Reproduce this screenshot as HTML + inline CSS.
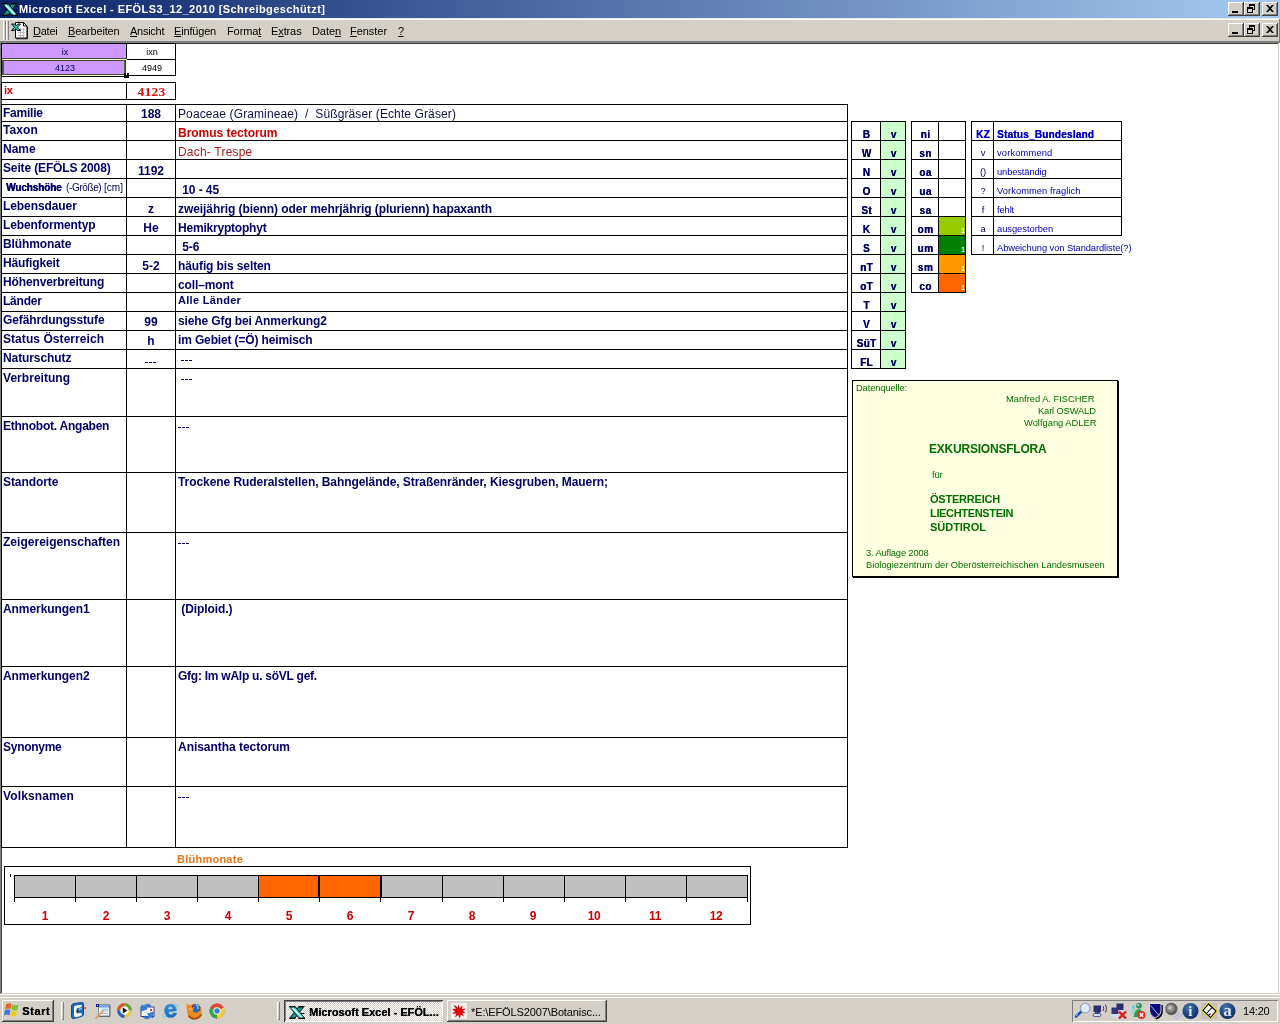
<!DOCTYPE html>
<html><head><meta charset="utf-8"><title>Microsoft Excel - EFÖLS3_12_2010</title>
<style>
html,body{margin:0;padding:0;}
body{width:1280px;height:1024px;overflow:hidden;background:#fff;position:relative;font-family:"Liberation Sans",sans-serif;}
.t{position:absolute;white-space:pre;font-family:"Liberation Sans",sans-serif;will-change:transform;}
.b{position:absolute;}
svg{position:absolute;overflow:visible;will-change:transform;}
u{text-decoration:underline;text-underline-offset:1px;}
</style></head><body>

<div class="b" style="left:0px;top:0px;width:1280px;height:18px;background:linear-gradient(to right,#0a246a 0%,#a6caf0 100%);"></div>

<div class="t" style="left:19px;top:2px;font-size:11px;line-height:14px;color:#fff;font-weight:bold;letter-spacing:0.42px;">Microsoft Excel - EFÖLS3_12_2010 [Schreibgeschützt]</div>
<div class="b" style="left:1228px;top:2px;width:16px;height:14px;background:#d4d0c8;box-shadow:inset -1px -1px 0 #404040,inset 1px 1px 0 #fff,inset -2px -2px 0 #808080;"></div>
<div class="b" style="left:1232px;top:11px;width:6px;height:2px;background:#000;"></div>
<div class="b" style="left:1244px;top:2px;width:16px;height:14px;background:#d4d0c8;box-shadow:inset -1px -1px 0 #404040,inset 1px 1px 0 #fff,inset -2px -2px 0 #808080;"></div>
<div class="b" style="left:1249px;top:4px;width:4px;height:3px;border:1px solid #000;border-top-width:2px;"></div>
<div class="b" style="left:1247px;top:7px;width:4px;height:3px;border:1px solid #000;border-top-width:2px;background:#d4d0c8;"></div>
<div class="b" style="left:1262px;top:2px;width:16px;height:14px;background:#d4d0c8;box-shadow:inset -1px -1px 0 #404040,inset 1px 1px 0 #fff,inset -2px -2px 0 #808080;"></div>
<svg style="left:1266px;top:5px" width="8" height="7" viewBox="0 0 8 7"><path d="M0 0h2l2 2 2-2h2l-3 3.5 3 3.5h-2l-2-2-2 2h-2l3-3.5z" fill="#000"/></svg>
<div class="b" style="left:0px;top:18px;width:1280px;height:25px;background:#d4d0c8;"></div>
<div class="b" style="left:0px;top:18px;width:1280px;height:1px;background:#ece9e2;"></div>
<div class="b" style="left:0px;top:19px;width:1280px;height:1px;background:#fff;"></div>
<div class="b" style="left:1279px;top:19px;width:1px;height:24px;background:#808080;"></div>
<div class="b" style="left:0px;top:41px;width:1280px;height:1px;background:#808080;"></div>
<div class="b" style="left:0px;top:42px;width:1280px;height:1px;background:#808080;"></div>
<div class="b" style="left:1228px;top:23px;width:16px;height:14px;background:#d4d0c8;box-shadow:inset -1px -1px 0 #404040,inset 1px 1px 0 #fff,inset -2px -2px 0 #808080;"></div>
<div class="b" style="left:1232px;top:32px;width:6px;height:2px;background:#000;"></div>
<div class="b" style="left:1244px;top:23px;width:16px;height:14px;background:#d4d0c8;box-shadow:inset -1px -1px 0 #404040,inset 1px 1px 0 #fff,inset -2px -2px 0 #808080;"></div>
<div class="b" style="left:1249px;top:25px;width:4px;height:3px;border:1px solid #000;border-top-width:2px;"></div>
<div class="b" style="left:1247px;top:28px;width:4px;height:3px;border:1px solid #000;border-top-width:2px;background:#d4d0c8;"></div>
<div class="b" style="left:1262px;top:23px;width:16px;height:14px;background:#d4d0c8;box-shadow:inset -1px -1px 0 #404040,inset 1px 1px 0 #fff,inset -2px -2px 0 #808080;"></div>
<svg style="left:1266px;top:26px" width="8" height="7" viewBox="0 0 8 7"><path d="M0 0h2l2 2 2-2h2l-3 3.5 3 3.5h-2l-2-2-2 2h-2l3-3.5z" fill="#000"/></svg>
<div class="b" style="left:3px;top:21px;width:1px;height:19px;background:#fff;"></div>
<div class="b" style="left:5px;top:21px;width:1px;height:19px;background:#808080;"></div>
<div class="b" style="left:6px;top:21px;width:1px;height:19px;background:#fff;"></div>
<div class="b" style="left:8px;top:21px;width:1px;height:19px;background:#808080;"></div>
<svg style="left:10px;top:21px" width="18" height="18" viewBox="0 0 18 18"><path d="M5.500 1.500h8l3.500 3.500v12h-11.500z" fill="#fff" stroke="#000" stroke-width="1"/><path d="M13.500 1.500v3.500h3.500" fill="none" stroke="#000"/><path d="M6 17.800h11.500M17.500 6v12" stroke="#000" stroke-width=".8"/><path d="M8 8.500h7M8 11.500h7M8 14.500h7M10.500 7v9M13.500 7v9" stroke="#b8b8b8" stroke-width="1"/><path d="M1.500 3h3l1.700 1.800L7.800 3h2.700L7.400 6.200 10.500 9.500h-3L5.800 7.600 4.200 9.500H1.500l3-3.300z" fill="#28c8c0" stroke="#000" stroke-width=".9"/></svg>
<div class="t" style="left:32.5px;top:24px;font-size:11px;line-height:14px;color:#000;letter-spacing:-0.236px;"><u>D</u>atei</div>
<div class="t" style="left:67.5px;top:24px;font-size:11px;line-height:14px;color:#000;letter-spacing:-0.171px;"><u>B</u>earbeiten</div>
<div class="t" style="left:129.75px;top:24px;font-size:11px;line-height:14px;color:#000;letter-spacing:-0.26px;"><u>A</u>nsicht</div>
<div class="t" style="left:174px;top:24px;font-size:11px;line-height:14px;color:#000;letter-spacing:-0.178px;"><u>E</u>infügen</div>
<div class="t" style="left:226.5px;top:24px;font-size:11px;line-height:14px;color:#000;letter-spacing:-0.098px;">Forma<u>t</u></div>
<div class="t" style="left:270.5px;top:24px;font-size:11px;line-height:14px;color:#000;letter-spacing:-0.112px;">E<u>x</u>tras</div>
<div class="t" style="left:311.5px;top:24px;font-size:11px;line-height:14px;color:#000;letter-spacing:-0.071px;">Date<u>n</u></div>
<div class="t" style="left:350px;top:24px;font-size:11px;line-height:14px;color:#000;letter-spacing:-0.042px;"><u>F</u>enster</div>
<div class="t" style="left:397.5px;top:24px;font-size:11px;line-height:14px;color:#000;letter-spacing:-0.618px;"><u>?</u></div>
<div class="b" style="left:0px;top:43px;width:1px;height:950px;background:#808080;"></div>
<div class="b" style="left:1px;top:43px;width:1px;height:950px;background:#404040;"></div>
<div class="b" style="left:0px;top:43px;width:1278px;height:1px;background:#404040;"></div>
<div class="b" style="left:1278px;top:43px;width:1px;height:950px;background:#d4d0c8;"></div>
<div class="b" style="left:1279px;top:43px;width:1px;height:950px;background:#fff;"></div>
<div class="b" style="left:0px;top:993px;width:1280px;height:1px;background:#d4d0c8;"></div>
<div class="b" style="left:0px;top:994px;width:1280px;height:1px;background:#fff;"></div>
<div class="b" style="left:0px;top:43px;width:1px;height:951px;background:#808080;"></div>
<div class="b" style="left:2px;top:44px;width:124px;height:31px;background:#cc99ff;"></div>
<div class="b" style="left:1px;top:43px;width:175px;height:1px;background:#000;"></div>
<div class="b" style="left:1px;top:59px;width:175px;height:1px;background:#000;"></div>
<div class="b" style="left:1px;top:75px;width:175px;height:1px;background:#000;"></div>
<div class="b" style="left:1px;top:43px;width:1px;height:33px;background:#000;"></div>
<div class="b" style="left:126px;top:43px;width:1px;height:33px;background:#000;"></div>
<div class="b" style="left:175px;top:43px;width:1px;height:33px;background:#000;"></div>
<div class="t" style="left:3px;top:46px;font-size:9px;line-height:13px;color:#000066;width:124px;text-align:center;">ix</div>
<div class="t" style="left:128px;top:46px;font-size:9px;line-height:13px;color:#000;width:48px;text-align:center;">ixn</div>
<div class="t" style="left:3px;top:62px;font-size:9px;line-height:13px;color:#000066;width:124px;text-align:center;">4123</div>
<div class="t" style="left:128px;top:62px;font-size:9px;line-height:13px;color:#000;width:48px;text-align:center;">4949</div>
<div class="b" style="left:2px;top:58px;width:125px;height:1px;background:#474b3a;"></div>
<div class="b" style="left:2px;top:59px;width:125px;height:1px;background:#f2f7d8;"></div>
<div class="b" style="left:2px;top:60px;width:124px;height:1px;background:#474b3a;"></div>
<div class="b" style="left:2px;top:74px;width:122px;height:1px;background:#474b3a;"></div>
<div class="b" style="left:2px;top:75px;width:122px;height:1px;background:#f2f7d8;"></div>
<div class="b" style="left:2px;top:76px;width:122px;height:1px;background:#000;"></div>
<div class="b" style="left:2px;top:60px;width:1px;height:15px;background:#474b3a;"></div>
<div class="b" style="left:3px;top:60px;width:1px;height:15px;background:#55603c;"></div>
<div class="b" style="left:124px;top:60px;width:1px;height:14px;background:#55603c;"></div>
<div class="b" style="left:125px;top:60px;width:1px;height:14px;background:#474b3a;"></div>
<div class="b" style="left:126px;top:60px;width:1px;height:13px;background:#f2f7d8;"></div>
<div class="b" style="left:124px;top:73px;width:5px;height:5px;background:#000;"></div>
<div class="b" style="left:126px;top:73px;width:1px;height:2px;background:#f2f7d8;"></div>
<div class="b" style="left:1px;top:82px;width:175px;height:1px;background:#000;"></div>
<div class="b" style="left:1px;top:99px;width:175px;height:1px;background:#000;"></div>
<div class="b" style="left:1px;top:82px;width:1px;height:18px;background:#000;"></div>
<div class="b" style="left:126px;top:82px;width:1px;height:18px;background:#000;"></div>
<div class="b" style="left:175px;top:82px;width:1px;height:18px;background:#000;"></div>
<div class="t" style="left:4px;top:83px;font-size:11px;line-height:14px;color:#dd0000;font-weight:bold;letter-spacing:-0.3px;">ix</div>
<div class="t" style="left:127px;top:84px;font-size:13.5px;line-height:15px;color:#e01010;font-weight:bold;width:49px;text-align:center;letter-spacing:0.25px;font-family:'Liberation Serif',serif;">4123</div>
<div class="b" style="left:1px;top:104px;width:847px;height:1px;background:#000;"></div>
<div class="b" style="left:1px;top:121px;width:847px;height:1px;background:#000;"></div>
<div class="b" style="left:1px;top:140px;width:847px;height:1px;background:#000;"></div>
<div class="b" style="left:1px;top:159px;width:847px;height:1px;background:#000;"></div>
<div class="b" style="left:1px;top:178px;width:847px;height:1px;background:#000;"></div>
<div class="b" style="left:1px;top:197px;width:847px;height:1px;background:#000;"></div>
<div class="b" style="left:1px;top:216px;width:847px;height:1px;background:#000;"></div>
<div class="b" style="left:1px;top:235px;width:847px;height:1px;background:#000;"></div>
<div class="b" style="left:1px;top:254px;width:847px;height:1px;background:#000;"></div>
<div class="b" style="left:1px;top:273px;width:847px;height:1px;background:#000;"></div>
<div class="b" style="left:1px;top:292px;width:847px;height:1px;background:#000;"></div>
<div class="b" style="left:1px;top:311px;width:847px;height:1px;background:#000;"></div>
<div class="b" style="left:1px;top:330px;width:847px;height:1px;background:#000;"></div>
<div class="b" style="left:1px;top:349px;width:847px;height:1px;background:#000;"></div>
<div class="b" style="left:1px;top:368px;width:847px;height:1px;background:#000;"></div>
<div class="b" style="left:1px;top:416px;width:847px;height:1px;background:#000;"></div>
<div class="b" style="left:1px;top:472px;width:847px;height:1px;background:#000;"></div>
<div class="b" style="left:1px;top:532px;width:847px;height:1px;background:#000;"></div>
<div class="b" style="left:1px;top:599px;width:847px;height:1px;background:#000;"></div>
<div class="b" style="left:1px;top:666px;width:847px;height:1px;background:#000;"></div>
<div class="b" style="left:1px;top:737px;width:847px;height:1px;background:#000;"></div>
<div class="b" style="left:1px;top:786px;width:847px;height:1px;background:#000;"></div>
<div class="b" style="left:1px;top:847px;width:847px;height:1px;background:#000;"></div>
<div class="b" style="left:1px;top:104px;width:1px;height:744px;background:#000;"></div>
<div class="b" style="left:126px;top:104px;width:1px;height:744px;background:#000;"></div>
<div class="b" style="left:175px;top:104px;width:1px;height:744px;background:#000;"></div>
<div class="b" style="left:847px;top:104px;width:1px;height:744px;background:#000;"></div>
<div class="t" style="left:3px;top:106px;font-size:12px;line-height:14px;color:#000066;font-weight:bold;letter-spacing:-0.222px;">Familie</div>
<div class="t" style="left:127px;top:107px;font-size:12px;line-height:14px;color:#000066;font-weight:bold;width:48px;text-align:center;">188</div>
<div class="t" style="left:178px;top:107px;font-size:12px;line-height:14px;color:#101048;letter-spacing:0.109px;">Poaceae (Gramineae)  /  Süßgräser (Echte Gräser)</div>
<div class="t" style="left:3px;top:123px;font-size:12px;line-height:14px;color:#000066;font-weight:bold;letter-spacing:0.07px;">Taxon</div>
<div class="t" style="left:177.5px;top:126px;font-size:12px;line-height:14px;color:#cc0000;font-weight:bold;letter-spacing:-0.035px;">Bromus tectorum</div>
<div class="t" style="left:3px;top:142px;font-size:12px;line-height:14px;color:#000066;font-weight:bold;letter-spacing:-0.034px;">Name</div>
<div class="t" style="left:178px;top:145px;font-size:12px;line-height:14px;color:#aa2020;letter-spacing:0.206px;">Dach- Trespe</div>
<div class="t" style="left:3px;top:161px;font-size:12px;line-height:14px;color:#000066;font-weight:bold;letter-spacing:-0.139px;">Seite (EFÖLS 2008)</div>
<div class="t" style="left:127px;top:164px;font-size:12px;line-height:14px;color:#000066;font-weight:bold;width:48px;text-align:center;">1192</div>
<div class="t" style="left:5.5px;top:181px;font-size:10px;line-height:13px;color:#000066;font-weight:bold;letter-spacing:-0.11px;text-shadow:.45px 0 0 #000066;">Wuchshöhe</div>
<div class="t" style="left:66px;top:181px;font-size:10px;line-height:13px;color:#000052;letter-spacing:-0.379px;">(-Größe)</div>
<div class="t" style="left:103.5px;top:181px;font-size:10px;line-height:13px;color:#000052;letter-spacing:0.028px;">[cm]</div>
<div class="t" style="left:178.5px;top:183px;font-size:12px;line-height:14px;color:#000066;font-weight:bold;letter-spacing:-0.08px;"> 10 - 45</div>
<div class="t" style="left:3px;top:199px;font-size:12px;line-height:14px;color:#000066;font-weight:bold;letter-spacing:-0.081px;">Lebensdauer</div>
<div class="t" style="left:127px;top:202px;font-size:12px;line-height:14px;color:#000066;font-weight:bold;width:48px;text-align:center;">z</div>
<div class="t" style="left:177.5px;top:202px;font-size:12px;line-height:14px;color:#000066;font-weight:bold;letter-spacing:-0.074px;">zweijährig (bienn) oder mehrjährig (plurienn) hapaxanth</div>
<div class="t" style="left:3px;top:218px;font-size:12px;line-height:14px;color:#000066;font-weight:bold;letter-spacing:-0.108px;">Lebenformentyp</div>
<div class="t" style="left:127px;top:221px;font-size:12px;line-height:14px;color:#000066;font-weight:bold;width:48px;text-align:center;">He</div>
<div class="t" style="left:177.5px;top:221px;font-size:12px;line-height:14px;color:#000066;font-weight:bold;letter-spacing:-0.204px;">Hemikryptophyt</div>
<div class="t" style="left:3px;top:237px;font-size:12px;line-height:14px;color:#000066;font-weight:bold;letter-spacing:-0.104px;">Blühmonate</div>
<div class="t" style="left:178.5px;top:240px;font-size:12px;line-height:14px;color:#000066;font-weight:bold;letter-spacing:-0.08px;"> 5-6</div>
<div class="t" style="left:3px;top:256px;font-size:12px;line-height:14px;color:#000066;font-weight:bold;letter-spacing:-0.141px;">Häufigkeit</div>
<div class="t" style="left:127px;top:259px;font-size:12px;line-height:14px;color:#000066;font-weight:bold;width:48px;text-align:center;">5-2</div>
<div class="t" style="left:177.5px;top:259px;font-size:12px;line-height:14px;color:#000066;font-weight:bold;letter-spacing:-0.111px;">häufig bis selten</div>
<div class="t" style="left:3px;top:275px;font-size:12px;line-height:14px;color:#000066;font-weight:bold;letter-spacing:-0.14px;">Höhenverbreitung</div>
<div class="t" style="left:177.5px;top:278px;font-size:12px;line-height:14px;color:#000066;font-weight:bold;letter-spacing:-0.108px;">coll–mont</div>
<div class="t" style="left:3px;top:294px;font-size:12px;line-height:14px;color:#000066;font-weight:bold;letter-spacing:-0.235px;">Länder</div>
<div class="t" style="left:177.5px;top:294px;font-size:11px;line-height:13px;color:#000066;font-weight:bold;letter-spacing:0.3px;">Alle Länder</div>
<div class="t" style="left:3px;top:313px;font-size:12px;line-height:14px;color:#000066;font-weight:bold;letter-spacing:-0.115px;">Gefährdungsstufe</div>
<div class="t" style="left:127px;top:315px;font-size:12px;line-height:14px;color:#000066;font-weight:bold;width:48px;text-align:center;">99</div>
<div class="t" style="left:177.5px;top:314px;font-size:12px;line-height:14px;color:#000066;font-weight:bold;letter-spacing:-0.119px;">siehe Gfg bei Anmerkung2</div>
<div class="t" style="left:3px;top:332px;font-size:12px;line-height:14px;color:#000066;font-weight:bold;letter-spacing:0.062px;">Status Österreich</div>
<div class="t" style="left:127px;top:334px;font-size:12px;line-height:14px;color:#000066;font-weight:bold;width:48px;text-align:center;">h</div>
<div class="t" style="left:177.5px;top:333px;font-size:12px;line-height:14px;color:#000066;font-weight:bold;letter-spacing:-0.14px;">im Gebiet (=Ö) heimisch</div>
<div class="t" style="left:3px;top:351px;font-size:12px;line-height:14px;color:#000066;font-weight:bold;letter-spacing:-0.095px;">Naturschutz</div>
<div class="b" style="left:145px;top:362px;width:3px;height:1px;background:#000058;"></div>
<div class="b" style="left:149px;top:362px;width:3px;height:1px;background:#000058;"></div>
<div class="b" style="left:153px;top:362px;width:3px;height:1px;background:#000058;"></div>
<div class="b" style="left:181px;top:360px;width:3px;height:1px;background:#000058;"></div>
<div class="b" style="left:185px;top:360px;width:3px;height:1px;background:#000058;"></div>
<div class="b" style="left:189px;top:360px;width:3px;height:1px;background:#000058;"></div>
<div class="t" style="left:3px;top:371px;font-size:12px;line-height:14px;color:#000066;font-weight:bold;letter-spacing:0.038px;">Verbreitung</div>
<div class="b" style="left:181px;top:379px;width:3px;height:1px;background:#000058;"></div>
<div class="b" style="left:185px;top:379px;width:3px;height:1px;background:#000058;"></div>
<div class="b" style="left:189px;top:379px;width:3px;height:1px;background:#000058;"></div>
<div class="t" style="left:3px;top:419px;font-size:12px;line-height:14px;color:#000066;font-weight:bold;letter-spacing:-0.236px;">Ethnobot. Angaben</div>
<div class="b" style="left:178px;top:427px;width:3px;height:1px;background:#000058;"></div>
<div class="b" style="left:182px;top:427px;width:3px;height:1px;background:#000058;"></div>
<div class="b" style="left:186px;top:427px;width:3px;height:1px;background:#000058;"></div>
<div class="t" style="left:3px;top:475px;font-size:12px;line-height:14px;color:#000066;font-weight:bold;letter-spacing:-0.067px;">Standorte</div>
<div class="t" style="left:178px;top:475px;font-size:12px;line-height:14px;color:#000066;font-weight:bold;letter-spacing:-0.067px;">Trockene Ruderalstellen, Bahngelände, Straßenränder, Kiesgruben, Mauern;</div>
<div class="t" style="left:3px;top:535px;font-size:12px;line-height:14px;color:#000066;font-weight:bold;letter-spacing:0.021px;">Zeigereigenschaften</div>
<div class="b" style="left:178px;top:543px;width:3px;height:1px;background:#000058;"></div>
<div class="b" style="left:182px;top:543px;width:3px;height:1px;background:#000058;"></div>
<div class="b" style="left:186px;top:543px;width:3px;height:1px;background:#000058;"></div>
<div class="t" style="left:3px;top:602px;font-size:12px;line-height:14px;color:#000066;font-weight:bold;letter-spacing:-0.063px;">Anmerkungen1</div>
<div class="t" style="left:177.5px;top:602px;font-size:12px;line-height:14px;color:#000066;font-weight:bold;letter-spacing:-0.08px;"> (Diploid.)</div>
<div class="t" style="left:3px;top:669px;font-size:12px;line-height:14px;color:#000066;font-weight:bold;letter-spacing:-0.063px;">Anmerkungen2</div>
<div class="t" style="left:177.5px;top:669px;font-size:12px;line-height:14px;color:#000066;font-weight:bold;letter-spacing:-0.249px;">Gfg: Im wAlp u. söVL gef.</div>
<div class="t" style="left:3px;top:740px;font-size:12px;line-height:14px;color:#000066;font-weight:bold;letter-spacing:-0.274px;">Synonyme</div>
<div class="t" style="left:177.5px;top:740px;font-size:12px;line-height:14px;color:#000066;font-weight:bold;letter-spacing:-0.038px;">Anisantha tectorum</div>
<div class="t" style="left:3px;top:789px;font-size:12px;line-height:14px;color:#000066;font-weight:bold;letter-spacing:0.119px;">Volksnamen</div>
<div class="b" style="left:178px;top:797px;width:3px;height:1px;background:#000058;"></div>
<div class="b" style="left:182px;top:797px;width:3px;height:1px;background:#000058;"></div>
<div class="b" style="left:186px;top:797px;width:3px;height:1px;background:#000058;"></div>
<div class="t" style="left:176.8px;top:853px;font-size:11px;line-height:13px;color:#e8741c;font-weight:bold;letter-spacing:0.244px;">Blühmonate</div>
<div class="b" style="left:4px;top:866px;width:745px;height:57px;border:1px solid #000;"></div>
<div class="b" style="left:14px;top:875px;width:61px;height:22px;background:#c0c0c0;"></div>
<div class="b" style="left:75px;top:875px;width:61px;height:22px;background:#c0c0c0;"></div>
<div class="b" style="left:136px;top:875px;width:61px;height:22px;background:#c0c0c0;"></div>
<div class="b" style="left:197px;top:875px;width:61px;height:22px;background:#c0c0c0;"></div>
<div class="b" style="left:258px;top:875px;width:61px;height:22px;background:#ff6600;"></div>
<div class="b" style="left:319px;top:875px;width:61px;height:22px;background:#ff6600;"></div>
<div class="b" style="left:380px;top:875px;width:62px;height:22px;background:#c0c0c0;"></div>
<div class="b" style="left:442px;top:875px;width:61px;height:22px;background:#c0c0c0;"></div>
<div class="b" style="left:503px;top:875px;width:61px;height:22px;background:#c0c0c0;"></div>
<div class="b" style="left:564px;top:875px;width:61px;height:22px;background:#c0c0c0;"></div>
<div class="b" style="left:625px;top:875px;width:61px;height:22px;background:#c0c0c0;"></div>
<div class="b" style="left:686px;top:875px;width:61px;height:22px;background:#c0c0c0;"></div>
<div class="b" style="left:14px;top:875px;width:734px;height:1px;background:#000;"></div>
<div class="b" style="left:14px;top:897px;width:734px;height:1px;background:#000;"></div>
<div class="b" style="left:14px;top:875px;width:1px;height:27px;background:#000;"></div>
<div class="b" style="left:75px;top:875px;width:1px;height:27px;background:#000;"></div>
<div class="b" style="left:136px;top:875px;width:1px;height:27px;background:#000;"></div>
<div class="b" style="left:197px;top:875px;width:1px;height:27px;background:#000;"></div>
<div class="b" style="left:258px;top:875px;width:1px;height:27px;background:#000;"></div>
<div class="b" style="left:319px;top:875px;width:1px;height:27px;background:#000;"></div>
<div class="b" style="left:380px;top:875px;width:1px;height:27px;background:#000;"></div>
<div class="b" style="left:442px;top:875px;width:1px;height:27px;background:#000;"></div>
<div class="b" style="left:503px;top:875px;width:1px;height:27px;background:#000;"></div>
<div class="b" style="left:564px;top:875px;width:1px;height:27px;background:#000;"></div>
<div class="b" style="left:625px;top:875px;width:1px;height:27px;background:#000;"></div>
<div class="b" style="left:686px;top:875px;width:1px;height:27px;background:#000;"></div>
<div class="b" style="left:747px;top:875px;width:1px;height:27px;background:#000;"></div>
<div class="b" style="left:318px;top:875px;width:1px;height:23px;background:#000;"></div>
<div class="b" style="left:381px;top:875px;width:1px;height:23px;background:#000;"></div>
<div class="b" style="left:10px;top:874px;width:1px;height:3px;background:#000;"></div>
<div class="t" style="left:30.3px;top:909px;font-size:12px;line-height:14px;color:#cc0000;font-weight:bold;width:30px;text-align:center;">1</div>
<div class="t" style="left:91.3px;top:909px;font-size:12px;line-height:14px;color:#cc0000;font-weight:bold;width:30px;text-align:center;">2</div>
<div class="t" style="left:152.2px;top:909px;font-size:12px;line-height:14px;color:#cc0000;font-weight:bold;width:30px;text-align:center;">3</div>
<div class="t" style="left:213.2px;top:909px;font-size:12px;line-height:14px;color:#cc0000;font-weight:bold;width:30px;text-align:center;">4</div>
<div class="t" style="left:274.2px;top:909px;font-size:12px;line-height:14px;color:#cc0000;font-weight:bold;width:30px;text-align:center;">5</div>
<div class="t" style="left:335.2px;top:909px;font-size:12px;line-height:14px;color:#cc0000;font-weight:bold;width:30px;text-align:center;">6</div>
<div class="t" style="left:396.1px;top:909px;font-size:12px;line-height:14px;color:#cc0000;font-weight:bold;width:30px;text-align:center;">7</div>
<div class="t" style="left:457.1px;top:909px;font-size:12px;line-height:14px;color:#cc0000;font-weight:bold;width:30px;text-align:center;">8</div>
<div class="t" style="left:518.1px;top:909px;font-size:12px;line-height:14px;color:#cc0000;font-weight:bold;width:30px;text-align:center;">9</div>
<div class="t" style="left:579.0px;top:909px;font-size:12px;line-height:14px;color:#cc0000;font-weight:bold;width:30px;text-align:center;letter-spacing:-0.4px;">10</div>
<div class="t" style="left:640.0px;top:909px;font-size:12px;line-height:14px;color:#cc0000;font-weight:bold;width:30px;text-align:center;letter-spacing:-0.4px;">11</div>
<div class="t" style="left:701.0px;top:909px;font-size:12px;line-height:14px;color:#cc0000;font-weight:bold;width:30px;text-align:center;letter-spacing:-0.4px;">12</div>
<div class="b" style="left:881px;top:122px;width:24px;height:246px;background:#ccffcc;"></div>
<div class="b" style="left:851px;top:121px;width:55px;height:1px;background:#000;"></div>
<div class="b" style="left:851px;top:140px;width:55px;height:1px;background:#000;"></div>
<div class="b" style="left:851px;top:159px;width:55px;height:1px;background:#000;"></div>
<div class="b" style="left:851px;top:178px;width:55px;height:1px;background:#000;"></div>
<div class="b" style="left:851px;top:197px;width:55px;height:1px;background:#000;"></div>
<div class="b" style="left:851px;top:216px;width:55px;height:1px;background:#000;"></div>
<div class="b" style="left:851px;top:235px;width:55px;height:1px;background:#000;"></div>
<div class="b" style="left:851px;top:254px;width:55px;height:1px;background:#000;"></div>
<div class="b" style="left:851px;top:273px;width:55px;height:1px;background:#000;"></div>
<div class="b" style="left:851px;top:292px;width:55px;height:1px;background:#000;"></div>
<div class="b" style="left:851px;top:311px;width:55px;height:1px;background:#000;"></div>
<div class="b" style="left:851px;top:330px;width:55px;height:1px;background:#000;"></div>
<div class="b" style="left:851px;top:349px;width:55px;height:1px;background:#000;"></div>
<div class="b" style="left:851px;top:368px;width:55px;height:1px;background:#000;"></div>
<div class="b" style="left:851px;top:121px;width:1px;height:248px;background:#000;"></div>
<div class="b" style="left:880px;top:121px;width:1px;height:248px;background:#000;"></div>
<div class="b" style="left:905px;top:121px;width:1px;height:248px;background:#000;"></div>
<div class="t" style="left:852px;top:128px;font-size:10px;line-height:13px;color:#000066;font-weight:bold;width:29px;text-align:center;letter-spacing:0.3px;text-shadow:.35px 0 0 #000066;">B</div>
<div class="t" style="left:881px;top:128px;font-size:10px;line-height:13px;color:#000066;font-weight:bold;width:25px;text-align:center;text-shadow:.35px 0 0 #000066;">v</div>
<div class="t" style="left:852px;top:147px;font-size:10px;line-height:13px;color:#000066;font-weight:bold;width:29px;text-align:center;letter-spacing:0.3px;text-shadow:.35px 0 0 #000066;">W</div>
<div class="t" style="left:881px;top:147px;font-size:10px;line-height:13px;color:#000066;font-weight:bold;width:25px;text-align:center;text-shadow:.35px 0 0 #000066;">v</div>
<div class="t" style="left:852px;top:166px;font-size:10px;line-height:13px;color:#000066;font-weight:bold;width:29px;text-align:center;letter-spacing:0.3px;text-shadow:.35px 0 0 #000066;">N</div>
<div class="t" style="left:881px;top:166px;font-size:10px;line-height:13px;color:#000066;font-weight:bold;width:25px;text-align:center;text-shadow:.35px 0 0 #000066;">v</div>
<div class="t" style="left:852px;top:185px;font-size:10px;line-height:13px;color:#000066;font-weight:bold;width:29px;text-align:center;letter-spacing:0.3px;text-shadow:.35px 0 0 #000066;">O</div>
<div class="t" style="left:881px;top:185px;font-size:10px;line-height:13px;color:#000066;font-weight:bold;width:25px;text-align:center;text-shadow:.35px 0 0 #000066;">v</div>
<div class="t" style="left:852px;top:204px;font-size:10px;line-height:13px;color:#000066;font-weight:bold;width:29px;text-align:center;letter-spacing:0.3px;text-shadow:.35px 0 0 #000066;">St</div>
<div class="t" style="left:881px;top:204px;font-size:10px;line-height:13px;color:#000066;font-weight:bold;width:25px;text-align:center;text-shadow:.35px 0 0 #000066;">v</div>
<div class="t" style="left:852px;top:223px;font-size:10px;line-height:13px;color:#000066;font-weight:bold;width:29px;text-align:center;letter-spacing:0.3px;text-shadow:.35px 0 0 #000066;">K</div>
<div class="t" style="left:881px;top:223px;font-size:10px;line-height:13px;color:#000066;font-weight:bold;width:25px;text-align:center;text-shadow:.35px 0 0 #000066;">v</div>
<div class="t" style="left:852px;top:242px;font-size:10px;line-height:13px;color:#000066;font-weight:bold;width:29px;text-align:center;letter-spacing:0.3px;text-shadow:.35px 0 0 #000066;">S</div>
<div class="t" style="left:881px;top:242px;font-size:10px;line-height:13px;color:#000066;font-weight:bold;width:25px;text-align:center;text-shadow:.35px 0 0 #000066;">v</div>
<div class="t" style="left:852px;top:261px;font-size:10px;line-height:13px;color:#000066;font-weight:bold;width:29px;text-align:center;letter-spacing:0.3px;text-shadow:.35px 0 0 #000066;">nT</div>
<div class="t" style="left:881px;top:261px;font-size:10px;line-height:13px;color:#000066;font-weight:bold;width:25px;text-align:center;text-shadow:.35px 0 0 #000066;">v</div>
<div class="t" style="left:852px;top:280px;font-size:10px;line-height:13px;color:#000066;font-weight:bold;width:29px;text-align:center;letter-spacing:0.3px;text-shadow:.35px 0 0 #000066;">oT</div>
<div class="t" style="left:881px;top:280px;font-size:10px;line-height:13px;color:#000066;font-weight:bold;width:25px;text-align:center;text-shadow:.35px 0 0 #000066;">v</div>
<div class="t" style="left:852px;top:299px;font-size:10px;line-height:13px;color:#000066;font-weight:bold;width:29px;text-align:center;letter-spacing:0.3px;text-shadow:.35px 0 0 #000066;">T</div>
<div class="t" style="left:881px;top:299px;font-size:10px;line-height:13px;color:#000066;font-weight:bold;width:25px;text-align:center;text-shadow:.35px 0 0 #000066;">v</div>
<div class="t" style="left:852px;top:318px;font-size:10px;line-height:13px;color:#000066;font-weight:bold;width:29px;text-align:center;letter-spacing:0.3px;text-shadow:.35px 0 0 #000066;">V</div>
<div class="t" style="left:881px;top:318px;font-size:10px;line-height:13px;color:#000066;font-weight:bold;width:25px;text-align:center;text-shadow:.35px 0 0 #000066;">v</div>
<div class="t" style="left:852px;top:337px;font-size:10px;line-height:13px;color:#000066;font-weight:bold;width:29px;text-align:center;letter-spacing:0.3px;text-shadow:.35px 0 0 #000066;">SüT</div>
<div class="t" style="left:881px;top:337px;font-size:10px;line-height:13px;color:#000066;font-weight:bold;width:25px;text-align:center;text-shadow:.35px 0 0 #000066;">v</div>
<div class="t" style="left:852px;top:356px;font-size:10px;line-height:13px;color:#000066;font-weight:bold;width:29px;text-align:center;letter-spacing:0.3px;text-shadow:.35px 0 0 #000066;">FL</div>
<div class="t" style="left:881px;top:356px;font-size:10px;line-height:13px;color:#000066;font-weight:bold;width:25px;text-align:center;text-shadow:.35px 0 0 #000066;">v</div>
<div class="b" style="left:939px;top:217px;width:26px;height:18px;background:#99cc00;"></div>
<div class="b" style="left:939px;top:236px;width:26px;height:18px;background:#008000;"></div>
<div class="b" style="left:939px;top:255px;width:26px;height:18px;background:#ff9900;"></div>
<div class="b" style="left:939px;top:274px;width:26px;height:18px;background:#ff6600;"></div>
<div class="b" style="left:911px;top:121px;width:55px;height:1px;background:#000;"></div>
<div class="b" style="left:911px;top:140px;width:55px;height:1px;background:#000;"></div>
<div class="b" style="left:911px;top:159px;width:55px;height:1px;background:#000;"></div>
<div class="b" style="left:911px;top:178px;width:55px;height:1px;background:#000;"></div>
<div class="b" style="left:911px;top:197px;width:55px;height:1px;background:#000;"></div>
<div class="b" style="left:911px;top:216px;width:55px;height:1px;background:#000;"></div>
<div class="b" style="left:911px;top:235px;width:55px;height:1px;background:#000;"></div>
<div class="b" style="left:911px;top:254px;width:55px;height:1px;background:#000;"></div>
<div class="b" style="left:911px;top:273px;width:55px;height:1px;background:#000;"></div>
<div class="b" style="left:911px;top:292px;width:55px;height:1px;background:#000;"></div>
<div class="b" style="left:911px;top:121px;width:1px;height:172px;background:#000;"></div>
<div class="b" style="left:938px;top:121px;width:1px;height:172px;background:#000;"></div>
<div class="b" style="left:965px;top:121px;width:1px;height:172px;background:#000;"></div>
<div class="t" style="left:912px;top:128px;font-size:10px;line-height:13px;color:#000066;font-weight:bold;width:27px;text-align:center;letter-spacing:0.5px;text-shadow:.35px 0 0 #000066;">ni</div>
<div class="t" style="left:912px;top:147px;font-size:10px;line-height:13px;color:#000066;font-weight:bold;width:27px;text-align:center;letter-spacing:0.5px;text-shadow:.35px 0 0 #000066;">sn</div>
<div class="t" style="left:912px;top:166px;font-size:10px;line-height:13px;color:#000066;font-weight:bold;width:27px;text-align:center;letter-spacing:0.5px;text-shadow:.35px 0 0 #000066;">oa</div>
<div class="t" style="left:912px;top:185px;font-size:10px;line-height:13px;color:#000066;font-weight:bold;width:27px;text-align:center;letter-spacing:0.5px;text-shadow:.35px 0 0 #000066;">ua</div>
<div class="t" style="left:912px;top:204px;font-size:10px;line-height:13px;color:#000066;font-weight:bold;width:27px;text-align:center;letter-spacing:0.5px;text-shadow:.35px 0 0 #000066;">sa</div>
<div class="t" style="left:912px;top:223px;font-size:10px;line-height:13px;color:#000066;font-weight:bold;width:27px;text-align:center;letter-spacing:0.5px;text-shadow:.35px 0 0 #000066;">om</div>
<div class="t" style="left:912px;top:242px;font-size:10px;line-height:13px;color:#000066;font-weight:bold;width:27px;text-align:center;letter-spacing:0.5px;text-shadow:.35px 0 0 #000066;">um</div>
<div class="t" style="left:912px;top:261px;font-size:10px;line-height:13px;color:#000066;font-weight:bold;width:27px;text-align:center;letter-spacing:0.5px;text-shadow:.35px 0 0 #000066;">sm</div>
<div class="t" style="left:912px;top:280px;font-size:10px;line-height:13px;color:#000066;font-weight:bold;width:27px;text-align:center;letter-spacing:0.5px;text-shadow:.35px 0 0 #000066;">co</div>
<div class="t" style="left:939px;top:225.5px;font-size:6.5px;line-height:9px;color:#fff;font-weight:bold;width:25.8px;text-align:right;">1</div>
<div class="t" style="left:939px;top:244.5px;font-size:6.5px;line-height:9px;color:#fff;font-weight:bold;width:25.8px;text-align:right;">1</div>
<div class="t" style="left:939px;top:263.5px;font-size:6.5px;line-height:9px;color:#fff;font-weight:bold;width:25.8px;text-align:right;">1</div>
<div class="t" style="left:939px;top:282.5px;font-size:6.5px;line-height:9px;color:#fff;font-weight:bold;width:25.8px;text-align:right;">1</div>
<div class="b" style="left:971px;top:121px;width:151px;height:1px;background:#000;"></div>
<div class="b" style="left:971px;top:140px;width:151px;height:1px;background:#000;"></div>
<div class="b" style="left:971px;top:159px;width:151px;height:1px;background:#000;"></div>
<div class="b" style="left:971px;top:178px;width:151px;height:1px;background:#000;"></div>
<div class="b" style="left:971px;top:197px;width:151px;height:1px;background:#000;"></div>
<div class="b" style="left:971px;top:216px;width:151px;height:1px;background:#000;"></div>
<div class="b" style="left:971px;top:235px;width:151px;height:1px;background:#000;"></div>
<div class="b" style="left:971px;top:254px;width:151px;height:1px;background:#000;"></div>
<div class="b" style="left:971px;top:121px;width:1px;height:134px;background:#000;"></div>
<div class="b" style="left:993px;top:121px;width:1px;height:134px;background:#000;"></div>
<div class="b" style="left:1121px;top:121px;width:1px;height:115px;background:#000;"></div>
<div class="t" style="left:972px;top:128px;font-size:10px;line-height:13px;color:#0000c0;font-weight:bold;width:22px;text-align:center;letter-spacing:0.4px;text-shadow:.35px 0 0 #0000c0;">KZ</div>
<div class="t" style="left:997px;top:128px;font-size:10px;line-height:13px;color:#0000c0;font-weight:bold;letter-spacing:0.22px;text-shadow:.35px 0 0 #0000c0;">Status_Bundesland</div>
<div class="t" style="left:972px;top:147px;font-size:9.33px;line-height:13px;color:#000066;width:22px;text-align:center;">v</div>
<div class="t" style="left:997px;top:147px;font-size:9.33px;line-height:13px;color:#0000b4;letter-spacing:0.147px;">vorkommend</div>
<div class="t" style="left:972px;top:166px;font-size:9.33px;line-height:13px;color:#000066;width:22px;text-align:center;">()</div>
<div class="t" style="left:997px;top:166px;font-size:9.33px;line-height:13px;color:#0000b4;letter-spacing:-0.113px;">unbeständig</div>
<div class="t" style="left:972px;top:185px;font-size:9.33px;line-height:13px;color:#000066;width:22px;text-align:center;">?</div>
<div class="t" style="left:997px;top:185px;font-size:9.33px;line-height:13px;color:#0000b4;letter-spacing:0.064px;">Vorkommen fraglich</div>
<div class="t" style="left:972px;top:204px;font-size:9.33px;line-height:13px;color:#000066;width:22px;text-align:center;">f</div>
<div class="t" style="left:997px;top:204px;font-size:9.33px;line-height:13px;color:#0000b4;letter-spacing:-0.107px;">fehlt</div>
<div class="t" style="left:972px;top:223px;font-size:9.33px;line-height:13px;color:#000066;width:22px;text-align:center;">a</div>
<div class="t" style="left:997px;top:223px;font-size:9.33px;line-height:13px;color:#0000b4;letter-spacing:-0.028px;">ausgestorben</div>
<div class="t" style="left:972px;top:242px;font-size:9.33px;line-height:13px;color:#000066;width:22px;text-align:center;">!</div>
<div class="t" style="left:997px;top:242px;font-size:9.33px;line-height:13px;color:#0000b4;letter-spacing:-0.078px;">Abweichung von Standardliste(?)</div>
<div class="b" style="left:852px;top:380px;width:264px;height:195px;background:#ffffe1;border:1px solid #000;box-shadow:1px 1px 0 #000;"></div>
<div class="t" style="left:855.5px;top:383px;font-size:9.33px;line-height:11px;color:#007000;letter-spacing:-0.116px;">Datenquelle:</div>
<div class="t" style="left:1005.75px;top:394px;font-size:9.33px;line-height:11px;color:#007000;letter-spacing:-0.009px;">Manfred A. FISCHER</div>
<div class="t" style="left:1037.5px;top:406px;font-size:9.33px;line-height:11px;color:#007000;letter-spacing:-0.138px;">Karl OSWALD</div>
<div class="t" style="left:1023.75px;top:418px;font-size:9.33px;line-height:11px;color:#007000;letter-spacing:0.005px;">Wolfgang ADLER</div>
<div class="t" style="left:928.75px;top:442px;font-size:12px;line-height:14px;color:#007000;font-weight:bold;letter-spacing:-0.212px;">EXKURSIONSFLORA</div>
<div class="t" style="left:931.5px;top:470px;font-size:9.33px;line-height:11px;color:#007000;letter-spacing:-0.129px;">für</div>
<div class="t" style="left:930px;top:493px;font-size:11px;line-height:13px;color:#007000;font-weight:bold;letter-spacing:-0.212px;">ÖSTERREICH</div>
<div class="t" style="left:930px;top:507px;font-size:11px;line-height:13px;color:#007000;font-weight:bold;letter-spacing:-0.338px;">LIECHTENSTEIN</div>
<div class="t" style="left:930px;top:521px;font-size:11px;line-height:13px;color:#007000;font-weight:bold;letter-spacing:-0.027px;">SÜDTIROL</div>
<div class="t" style="left:865.5px;top:548px;font-size:9.33px;line-height:11px;color:#007000;letter-spacing:-0.157px;">3. Auflage 2008</div>
<div class="t" style="left:865.5px;top:560px;font-size:9.33px;line-height:11px;color:#007000;letter-spacing:-0.036px;">Biologiezentrum der Oberösterreichischen Landesmuseen</div>
<div class="b" style="left:0px;top:995px;width:1280px;height:29px;background:#d4d0c8;"></div>
<div class="b" style="left:0px;top:997px;width:1280px;height:1px;background:#fff;"></div>
<div class="b" style="left:2px;top:1000px;width:52px;height:22px;background:#d4d0c8;box-shadow:inset -1px -1px 0 #404040,inset 1px 1px 0 #fff,inset -2px -2px 0 #808080;"></div>
<svg style="left:4px;top:1002px" width="16" height="15" viewBox="0 0 16 15"><path d="M2 2.200q2.800-1.800 5.500-.2l-1 5.200q-2.600-1.400-5.500.2z" fill="#e8632a"/><path d="M8.500 2.600q2.800 1.400 6 .2l-1.200 5.200q-3 1.200-5.800-.2z" fill="#7ac52e"/><path d="M.9 8.300q2.800-1.700 5.500-.2l-1 5.200q-2.700-1.500-5.500.2z" fill="#3f74d6"/><path d="M7.300 8.700q2.800 1.400 5.900.2l-1.100 5.200q-3 1.200-5.900-.2z" fill="#f3c81d"/></svg>
<div class="t" style="left:22px;top:1004px;font-size:11px;line-height:14px;color:#000;font-weight:bold;letter-spacing:0.588px;text-shadow:.4px 0 0 #000;">Start</div>
<div class="b" style="left:61px;top:1002px;width:1px;height:18px;background:#fff;"></div>
<div class="b" style="left:63px;top:1002px;width:1px;height:18px;background:#808080;"></div>
<div class="b" style="left:61px;top:1002px;width:2px;height:1px;background:#fff;"></div>
<div class="b" style="left:62px;top:1019px;width:2px;height:1px;background:#808080;"></div>
<div class="b" style="left:277px;top:1002px;width:1px;height:18px;background:#fff;"></div>
<div class="b" style="left:279px;top:1002px;width:1px;height:18px;background:#808080;"></div>
<div class="b" style="left:277px;top:1002px;width:2px;height:1px;background:#fff;"></div>
<div class="b" style="left:278px;top:1019px;width:2px;height:1px;background:#808080;"></div>
<svg style="left:70px;top:1002px" width="17" height="17" viewBox="0 0 17 17"><path d="M1.500 4Q1.500 2 4 1.600l7.500-1.100q2-.3 2 1.800v9.700q0 2-2 2.500l-7 2q-3 .6-3-2z" fill="#1b66bd" stroke="#0d4796" stroke-width="1"/><path d="M4 5.200Q4 3.600 6 3.400l4.500-.7q1.500-.2 1.500 1.300l-1.500 1.500-3 .5q-1 .2-1 1.200v3.500q0 1 1 .8l3-.7 1.500.8v.6q0 1.500-1.500 1.900l-4 1.100q-2.500.5-2.500-1.500z" fill="#f2f8ff"/><path d="M7 8.600l5-2.300" stroke="#7db8ee" stroke-width="1.800"/><path d="M5.800 9.200l2.400-2.300.6 3z" fill="#222"/><circle cx="15.200" cy="6" r="1.200" fill="#e8632a"/></svg>
<svg style="left:94px;top:1002px" width="17" height="17" viewBox="0 0 17 17"><rect x="4.500" y="2.500" width="11" height="11.500" fill="#eef3fb" stroke="#8a8fa0" stroke-width="1"/><path d="M5 14.500h11M16 3v11.500" stroke="#6a6a72" stroke-width="1"/><rect x="5" y="3" width="10" height="2.600" fill="#7aa6e6"/><rect x="7.500" y="6.500" width="6.500" height="3.200" fill="#a8d8ee"/><path d="M7 11.500h7" stroke="#b0b4c0"/><rect x="2" y="2" width="3" height="3" fill="#10108a"/><rect x="3" y="3" width="1" height="1" fill="#fff"/><path d="M8.500 8.500L2.500 14.800l-1.300 1.600 2-.6L9.500 9.500z" fill="#f0a24a" stroke="#c47828" stroke-width=".4"/></svg>
<svg style="left:116px;top:1002px" width="17" height="17" viewBox="0 0 17 17"><path d="M8.500 8.500V1A7.500 7.500 0 0 0 1 8.500z" fill="#dc5326"/><path d="M8.500 8.500H16A7.500 7.500 0 0 0 8.500 1z" fill="#6f9f2c"/><path d="M8.500 8.500V16A7.500 7.500 0 0 0 16 8.500z" fill="#e9c63a"/><path d="M8.500 8.500H1A7.500 7.500 0 0 0 8.500 16z" fill="#2b5fc0"/><circle cx="8.500" cy="8.500" r="4.300" fill="#f4f4f4"/><path d="M6.800 5.600l4.600 2.900-4.600 2.900z" fill="#111"/></svg>
<svg style="left:139px;top:1002px" width="17" height="18" viewBox="0 0 17 18"><rect x="2" y="5" width="13" height="9.500" fill="#f6f8fc" stroke="#3a4280" stroke-width="1"/><rect x="11" y="7" width="2" height="2" fill="#d8442a"/><path d="M4.500 10.500h4" stroke="#c8ccd8"/><path d="M12 3.500Q8 .5 4.800 4.200L3 2.800 2.600 9 8.200 7 6.400 5.600Q8.500 3.500 10.500 5z" fill="#2f86e6" stroke="#1554b0" stroke-width=".6"/><path d="M4.500 15.500Q8.500 18.500 11.800 14.800l1.800 1.400L14 10 8.400 12l1.800 1.400Q8 15.500 6 14z" fill="#2f86e6" stroke="#1554b0" stroke-width=".6"/></svg>
<svg style="left:161px;top:1001px" width="19" height="19" viewBox="0 0 19 19"><defs><linearGradient id="ieg" x1="0" y1="0" x2="0" y2="1"><stop offset="0" stop-color="#43a8f2"/><stop offset="1" stop-color="#0c58b6"/></linearGradient></defs><ellipse cx="9.500" cy="9.800" rx="9" ry="3.200" transform="rotate(-38 9.500 9.800)" fill="none" stroke="#86ccf4" stroke-width="1.400"/><text x="2.800" y="16.200" font-family="Liberation Sans" font-weight="bold" font-size="24" fill="url(#ieg)" stroke="url(#ieg)" stroke-width=".5" transform="rotate(-8 9.500 10)">e</text></svg>
<svg style="left:186px;top:1002px" width="17" height="18" viewBox="0 0 17 18"><circle cx="8.600" cy="9.300" r="7.500" fill="#e2711a"/><path d="M2.500 13.500Q5 17.500 9.500 16.800T15.500 12" fill="none" stroke="#a8480e" stroke-width="1.600"/><circle cx="9.800" cy="6.800" r="4.700" fill="#2a68b8"/><path d="M10 2.500q2.500 1.500 2 4.500" fill="none" stroke="#8cc8f4" stroke-width="1.400"/><path d="M.8 1.200Q2.500 3.300 4.800 3.300 7.800 3.300 8.300 6 6 6.500 6.500 8.800q1.500 2.400 4.700 1.700 2.300-.8 3.300-3 .6 3.500-1.500 6T7.500 15.500Q3 14.500 1.500 10.500T.8 1.200z" fill="#ee8a1c"/><path d="M3 7.500Q5.500 6 6.500 8.500" fill="none" stroke="#f8c85a" stroke-width="1.200"/><path d="M15 6q1.300 3.500-.3 6.500" fill="none" stroke="#f4b43a" stroke-width="1.200"/><circle cx="6.800" cy="4.600" r=".8" fill="#111"/></svg>
<svg style="left:209px;top:1003px" width="16" height="16" viewBox="0 0 16 16"><circle cx="8" cy="8" r="7.500" fill="#dd4a3a"/><path d="M8 8L1.500 4.250A7.500 7.500 0 0 0 8 15.500z" fill="#3aa54a"/><path d="M8 8v7.500A7.500 7.500 0 0 0 14.500 4.250z" fill="#f4cf2e"/><path d="M8 8L1.500 4.250A7.500 7.500 0 0 1 14.500 4.250z" fill="#dd4a3a"/><circle cx="8" cy="8" r="3.700" fill="#f4f4f4"/><circle cx="8" cy="8" r="2.700" fill="#3c7fd8"/></svg>
<div class="b" style="left:284px;top:1000px;width:159px;height:22px;background:#fff;background-image:repeating-conic-gradient(#d4d0c8 0 25%,#fff 0 50%);background-size:2px 2px;box-shadow:inset 1px 1px 0 #404040,inset -1px -1px 0 #fff,inset 2px 2px 0 #808080;"></div>
<svg style="left:289px;top:1006px" width="16" height="13" viewBox="0 0 16 13"><path d="M0 .5h6.500M9.500 .5h6M0 12.500h6.500M9.500 12.500h6.500M12 7.500h3.500" stroke="#000" stroke-width="1"/><path d="M9.500 1h5L6 12H.8z" fill="#17958f" stroke="#000" stroke-width=".9"/><path d="M.8 1h5.700l9 11H9.800z" fill="#2fc8c0" stroke="#000" stroke-width=".9"/><path d="M3.400 1.800l9.400 9.600" stroke="#c8ffff" stroke-width="1.700"/></svg>
<div class="t" style="left:309px;top:1005px;font-size:11px;line-height:14px;color:#000;font-weight:bold;letter-spacing:0.005px;text-shadow:.3px 0 0 #000;">Microsoft Excel - EFÖL...</div>
<div class="b" style="left:447px;top:1000px;width:160px;height:22px;background:#d4d0c8;box-shadow:inset -1px -1px 0 #404040,inset 1px 1px 0 #fff,inset -2px -2px 0 #808080;"></div>
<svg style="left:451px;top:1003px" width="16" height="16" viewBox="0 0 16 16"><rect width="16" height="16" fill="#f1efee"/><path d="M7.500 1.500l1.200 3.500 3-2.500-.8 3.500 4-.5-3 2.500 3 1.500-3.500.5 1.500 3.500-3.200-2-.7 4.500-1.800-4-3.200 2.500 1.200-3.800L1 10.500l3-2L1 6l3.800-.2L3.500 2l3 2.500z" fill="#e00808"/><circle cx="8" cy="8" r="2.800" fill="#e00808"/><path d="M3 2.500l2 2" stroke="#400" stroke-width="1"/></svg>
<div class="t" style="left:470.6px;top:1005px;font-size:11px;line-height:14px;color:#000;letter-spacing:-0.119px;">*E:\EFÖLS2007\Botanisc...</div>
<div class="b" style="left:1072px;top:1000px;width:206px;height:22px;box-shadow:inset 1px 1px 0 #808080,inset -1px -1px 0 #fff;"></div>
<svg style="left:1074px;top:1002px" width="18" height="17" viewBox="0 0 18 17"><path d="M2 14.500l6-5.500" stroke="#1e4fc0" stroke-width="2.600" stroke-linecap="round"/><path d="M2 14l2-1.800" stroke="#9fc0ff" stroke-width="1"/><circle cx="11.200" cy="6.200" r="4.800" fill="#d8ecfa" stroke="#9aa6b4" stroke-width="1.300"/><path d="M8.500 5a3 3 0 0 1 3-2" stroke="#fff" stroke-width="1.200" fill="none"/></svg>
<svg style="left:1092px;top:1002px" width="18" height="17" viewBox="0 0 18 17"><rect x="1.500" y="3.500" width="7.500" height="6.500" fill="#2c2c6e"/><path d="M3 10h5v2H3z" fill="#3a3a88"/><rect x="1" y="11.500" width="8" height="3" rx="1.500" fill="#d4dcf8" stroke="#3a3a88" stroke-width=".8"/><path d="M11 4q1.500 2.500 0 5M13.500 2.500q2.200 4 0 8" fill="none" stroke="#3a3a5a" stroke-width="1"/></svg>
<svg style="left:1110px;top:1002px" width="18" height="18" viewBox="0 0 18 18"><rect x="6.500" y="1.500" width="7" height="6.500" fill="#2c2c6e"/><rect x="1.500" y="5.500" width="7" height="6.500" fill="#34347a"/><rect x="1.500" y="12" width="7" height="3.500" fill="#d4dcf8"/><rect x="8.500" y="8" width="5" height="2.500" fill="#d4dcf8"/><path d="M9 9.500l7 7M16 9.500l-7 7" stroke="#e01818" stroke-width="2.400"/></svg>
<svg style="left:1129px;top:1002px" width="18" height="18" viewBox="0 0 18 18"><circle cx="4.500" cy="5" r="1.800" fill="#7cc4e8"/><path d="M1.500 12q1-5 3.500-5t3 5z" fill="#9fd8c8"/><circle cx="10" cy="3.800" r="2.800" fill="#2f8f4f"/><circle cx="9.300" cy="3" r="1" fill="#bfe8ff"/><path d="M4.500 15q1.500-8 5.500-8t4 8z" fill="#2fa04f"/><circle cx="12.500" cy="13" r="4" fill="#e0301c"/><path d="M10.800 11.300l3.400 3.400M14.200 11.300l-3.400 3.400" stroke="#fff" stroke-width="1.400"/></svg>
<svg style="left:1148px;top:1002px" width="16" height="18" viewBox="0 0 16 18"><path d="M2 2.500h12v7q0 5-6 7.500-6-2.500-6-7.500z" fill="#000" transform="translate(.8 .6)"/><path d="M1.500 1.500h11.500v7.500q0 4.500-5.800 7-5.700-2.500-5.700-7z" fill="#0c0c78" stroke="#e8e8f4" stroke-width=".9"/><path d="M2.500 3.500l8.500 10" stroke="#a8b0e8" stroke-width="1"/></svg>
<svg style="left:1164px;top:1002px" width="20" height="18" viewBox="0 0 20 18"><circle cx="7.300" cy="7" r="6.200" fill="#5c5c5c"/><circle cx="6.600" cy="6.300" r="4" fill="#8e8e8e"/><circle cx="6" cy="5.700" r="2" fill="#c4c4c4"/><path d="M2.500 3.500A6.200 6.200 0 0 0 3.500 12" fill="none" stroke="#b0b0b0" stroke-width=".8"/><path d="M10 15q4-1 5.500-5M12 17q4.500-1.500 6-6" fill="none" stroke="#b8b4ee" stroke-width="1.100"/></svg>
<svg style="left:1182px;top:1002px" width="17" height="18" viewBox="0 0 17 18"><defs><radialGradient id="g1182" cx=".4" cy=".3" r=".8"><stop offset="0" stop-color="#4a78b4"/><stop offset=".55" stop-color="#1c4480"/><stop offset="1" stop-color="#0e2a58"/></radialGradient></defs><circle cx="8.500" cy="9" r="8" fill="url(#g1182)"/><text x="6.3" y="14" font-family="Liberation Serif" font-weight="bold" font-size="15" fill="#dce8f6">i</text></svg>
<div class="b" style="left:1201px;top:1003px;width:16px;height:16px;background:#c4c1ba;"></div>
<svg style="left:1201px;top:1002px" width="17" height="18" viewBox="0 0 17 18"><path d="M7.500 2l7.500 7-5.500 6.500L2 8.500z" fill="#fff" stroke="#f0e020" stroke-width="3.200" stroke-linejoin="round"/><path d="M7.500 2l7.500 7-5.500 6.500L2 8.500z" fill="#fff" stroke="#000" stroke-width="1.100"/><path d="M6 11l5-5.500M8 13l1.500-1.500" stroke="#000" stroke-width="1.100"/><circle cx="11.800" cy="12.300" r=".9" fill="#e03030"/></svg>
<svg style="left:1219px;top:1002px" width="17" height="18" viewBox="0 0 17 18"><defs><radialGradient id="g1219" cx=".4" cy=".3" r=".8"><stop offset="0" stop-color="#4a78b4"/><stop offset=".55" stop-color="#1c4480"/><stop offset="1" stop-color="#0e2a58"/></radialGradient></defs><circle cx="8.500" cy="9" r="8" fill="url(#g1219)"/><text x="4.2" y="14" font-family="Liberation Serif" font-weight="bold" font-size="17" fill="#dce8f6">a</text></svg>
<div class="t" style="left:1242.5px;top:1004px;font-size:11px;line-height:14px;color:#000;letter-spacing:-0.206px;">14:20</div>
<svg style="left:2px;top:3px" width="16" height="13" viewBox="0 0 16 13"><path d="M0 .5h6.500M9.500 .5h6M0 12.500h6.500M9.500 12.500h6.500M12 7.500h3.500" stroke="#000" stroke-width="1"/><path d="M9.500 1h5L6 12H.8z" fill="#17958f" stroke="#000" stroke-width=".9"/><path d="M.8 1h5.700l9 11H9.800z" fill="#2fc8c0" stroke="#000" stroke-width=".9"/><path d="M3.400 1.800l9.400 9.600" stroke="#c8ffff" stroke-width="1.700"/></svg>
</body></html>
